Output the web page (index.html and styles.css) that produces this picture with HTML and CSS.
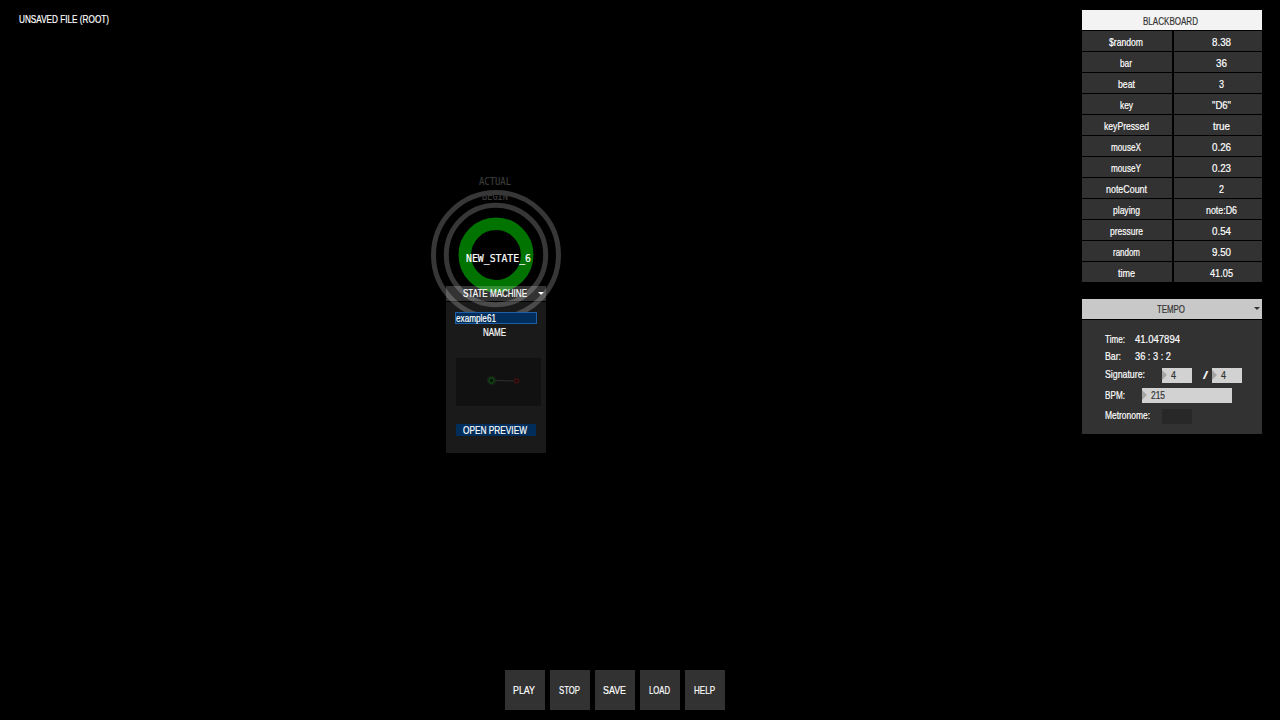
FILE: index.html
```html
<!DOCTYPE html>
<html lang="en">
<head>
<meta charset="utf-8">
<title>State machine editor</title>
<link rel="stylesheet" href="styles.css">
</head>
<body>
<main class="app">
  <div class="file-name"><span class="t" data-w="90">UNSAVED FILE (ROOT)</span></div>

  <section class="node">
    <div class="node-tag tag-actual"><span class="t" data-w="32">ACTUAL</span></div>
    <div class="node-tag tag-begin"><span class="t" data-w="26">BEGIN</span></div>
    <svg class="rings" width="132" height="132" viewBox="0 0 132 132">
      <circle cx="66" cy="66" r="62.5" fill="none" stroke="#373737" stroke-width="5"/>
      <circle cx="66" cy="66" r="49.7" fill="none" stroke="#373737" stroke-width="5"/>
      <circle cx="66" cy="66" r="31.2" fill="none" stroke="#007300" stroke-width="12.6"/>
    </svg>
    <div class="node-name"><span class="t" data-w="65">NEW_STATE_6</span></div>
  </section>

  <section class="machine">
    <header class="machine-head"><span class="t" data-w="64">STATE MACHINE</span><i class="caret"></i></header>
    <div class="machine-body">
      <div class="name-field"><span class="t" data-w="40">example61</span></div>
      <div class="name-label"><span class="t" data-w="23">NAME</span></div>
      <svg class="preview" width="85" height="48" viewBox="0 0 85 48">
        <path d="M39 22.5L58 23" stroke="#303030"/>
        <circle cx="35.5" cy="22.5" r="2.6" fill="#071507" stroke="#124012" stroke-width="1.6"/>
        <circle cx="35.5" cy="22.5" r="4.3" fill="none" stroke="#1c261c" stroke-width=".8"/>
        <circle cx="60.5" cy="22.8" r="2" fill="#160606" stroke="#3b1010" stroke-width="1.8"/>
      </svg>
      <div class="open"><span class="t" data-w="64">OPEN PREVIEW</span></div>
    </div>
  </section>

  <aside class="side">
    <section class="board">
      <header class="board-head"><span class="t" data-w="55">BLACKBOARD</span></header>
      <div class="row"><b><span class="t" data-w="34">$random</span></b><b><span class="t" data-w="19">8.38</span></b></div>
      <div class="row"><b><span class="t" data-w="12">bar</span></b><b><span class="t" data-w="11">36</span></b></div>
      <div class="row"><b><span class="t" data-w="17">beat</span></b><b><span class="t" data-w="5">3</span></b></div>
      <div class="row"><b><span class="t" data-w="13">key</span></b><b><span class="t" data-w="19">"D6"</span></b></div>
      <div class="row"><b><span class="t" data-w="45">keyPressed</span></b><b><span class="t" data-w="17">true</span></b></div>
      <div class="row"><b><span class="t" data-w="30">mouseX</span></b><b><span class="t" data-w="19">0.26</span></b></div>
      <div class="row"><b><span class="t" data-w="30">mouseY</span></b><b><span class="t" data-w="19">0.23</span></b></div>
      <div class="row"><b><span class="t" data-w="41">noteCount</span></b><b><span class="t" data-w="5">2</span></b></div>
      <div class="row"><b><span class="t" data-w="27">playing</span></b><b><span class="t" data-w="31">note:D6</span></b></div>
      <div class="row"><b><span class="t" data-w="33">pressure</span></b><b><span class="t" data-w="19">0.54</span></b></div>
      <div class="row"><b><span class="t" data-w="27">random</span></b><b><span class="t" data-w="19">9.50</span></b></div>
      <div class="row"><b><span class="t" data-w="17">time</span></b><b><span class="t" data-w="23">41.05</span></b></div>
    </section>

    <section class="tempo">
      <header class="tempo-head"><span class="t" data-w="28">TEMPO</span><i class="caret"></i></header>
      <div class="tempo-body">
        <div class="line l-time"><span class="lbl w30"><span class="t" data-w="20">Time:</span></span><span class="t" data-w="45">41.047894</span></div>
        <div class="line l-bar"><span class="lbl w30"><span class="t" data-w="16">Bar:</span></span><span class="t" data-w="36">36 : 3 : 2</span></div>
        <div class="line l-sig"><span class="lbl w57"><span class="t" data-w="40">Signature:</span></span><span class="num short"><span class="t" data-w="5">4</span></span><span class="slash"><span class="t" data-w="5">/</span></span><span class="num short"><span class="t" data-w="5">4</span></span></div>
        <div class="line l-bpm"><span class="lbl w37"><span class="t" data-w="20">BPM:</span></span><span class="num long"><span class="t" data-w="14">215</span></span></div>
        <div class="line l-met"><span class="lbl w57"><span class="t" data-w="45">Metronome:</span></span><span class="toggle"></span></div>
      </div>
    </section>
  </aside>

  <nav class="toolbar">
    <button><span class="t" data-w="22">PLAY</span></button>
    <button><span class="t" data-w="21">STOP</span></button>
    <button><span class="t" data-w="23">SAVE</span></button>
    <button><span class="t" data-w="21">LOAD</span></button>
    <button><span class="t" data-w="21">HELP</span></button>
  </nav>
</main>
<script src="fit.js"></script>
</body>
</html>
```
FILE: styles.css
```css
* { box-sizing: border-box; }
body {
  margin: 0;
  background: #000;
  color: #fff;
  font: 11px/14px "Liberation Sans", sans-serif;
}
.app {
  position: relative;
  width: 1280px;
  height: 720px;
  overflow: hidden;
  background: #000;
}
.t {
  display: inline-block;
  flex: none;
  white-space: pre;
  transform-origin: 0 50%;
  -webkit-text-stroke: .2px currentColor;
}
.file-name { position: absolute; left: 19px; top: 12px; }

.node-tag, .node-name { font-family: "DejaVu Sans Mono", monospace; font-size: 10.5px; }
.node-tag { position: absolute; display: flex; justify-content: center; width: 60px; color: #3c3c3c; }
.tag-actual { left: 465px; top: 174px; }
.tag-begin { left: 465px; top: 189px; }
.rings { position: absolute; left: 430px; top: 189px; }
.node-name { position: absolute; left: 466px; top: 251px; }

.machine { position: absolute; left: 446px; top: 286px; width: 100px; }
.machine-head {
  position: relative;
  display: flex;
  justify-content: center;
  height: 15px;
  padding-right: 2px;
  background: rgba(255, 255, 255, .2);
}
.caret {
  position: absolute;
  right: 2px;
  top: 6px;
  border: 3px solid transparent;
  border-top-color: #fff;
  border-bottom: 0;
}
.machine-body {
  display: flex;
  flex-direction: column;
  height: 151px;
  margin-top: 1px;
  padding: 10px 9px 0;
  background: rgba(255, 255, 255, .1);
}
.name-field {
  width: 82px;
  height: 12px;
  border: 1px solid #1f5fa8;
  background: #002d5a;
  line-height: 11px;
}
.name-label { display: flex; justify-content: center; height: 20px; padding-right: 3px; padding-top: 1px; }
.preview { margin: 14px 0 0 1px; background: #111; }
.open {
  display: flex;
  justify-content: center;
  width: 80px;
  height: 12px;
  margin: 18px 0 0 1px;
  padding-right: 2px;
  background: #002d5a;
  line-height: 13px;
}

.side { position: absolute; left: 1082px; top: 10px; width: 180px; }
.board { display: flex; flex-direction: column; gap: 1px; }
.board-head {
  display: flex;
  justify-content: center;
  height: 20px;
  padding-right: 3px;
  background: #f3f3f3;
  color: #323232;
  line-height: 22px;
}
.row { display: grid; grid-template: 20px / 90px 88px; gap: 2px; line-height: 22px; }
.row b { display: flex; justify-content: center; height: 20px; background: #323232; font-weight: normal; }
.row b:first-child { padding-right: 2px; }
.row b:last-child { padding-left: 6px; }

.tempo { margin-top: 17px; }
.tempo-head {
  position: relative;
  display: flex;
  justify-content: center;
  height: 20px;
  padding-right: 2px;
  background: #c8c8c8;
  color: #323232;
  line-height: 21px;
}
.tempo-head .caret { top: 8px; border-top-color: #323232; }
.tempo-body { height: 114px; margin-top: 1px; padding: 11px 0 0 23px; background: #323232; }
.line { display: flex; align-items: center; }
.l-time, .l-bar { height: 17px; padding-bottom: 2px; }
.l-sig { height: 20px; }
.l-bpm { height: 20px; }
.l-met { height: 22px; }
.lbl { display: flex; flex: none; }
.l-sig .lbl, .l-met .lbl { padding-bottom: 2px; }
.w30 { width: 30px; }
.w37 { width: 37px; }
.w57 { width: 57px; }
.num {
  position: relative;
  display: flex;
  height: 15px;
  padding-left: 9px;
  background: #d2d2d2;
  color: #323232;
  line-height: 15px;
}
.num::before {
  content: "";
  position: absolute;
  left: 0;
  top: 2px;
  border: 5.5px solid transparent;
  border-left-color: #a5a5a5;
  border-right: 0;
}
.short { width: 30px; }
.long { width: 90px; }
.slash { display: flex; justify-content: center; width: 20px; padding-left: 6px; }
.toggle { width: 30px; height: 15px; background: #282828; }

.toolbar { position: absolute; left: 505px; top: 670px; display: flex; gap: 5px; }
.toolbar button {
  display: flex;
  align-items: center;
  justify-content: center;
  width: 40px;
  height: 40px;
  padding: 0 2px 0 0;
  border: 0;
  background: #323232;
  color: #fff;
  font: inherit;
}
```
FILE: fit.js
```js
document.querySelectorAll(".t").forEach(function (el) {
  var natural = el.getBoundingClientRect().width;
  var w = Number(el.dataset.w);
  el.style.transform = "scaleX(" + w / natural + ")";
  el.style.marginRight = w - natural + "px";
});
```
